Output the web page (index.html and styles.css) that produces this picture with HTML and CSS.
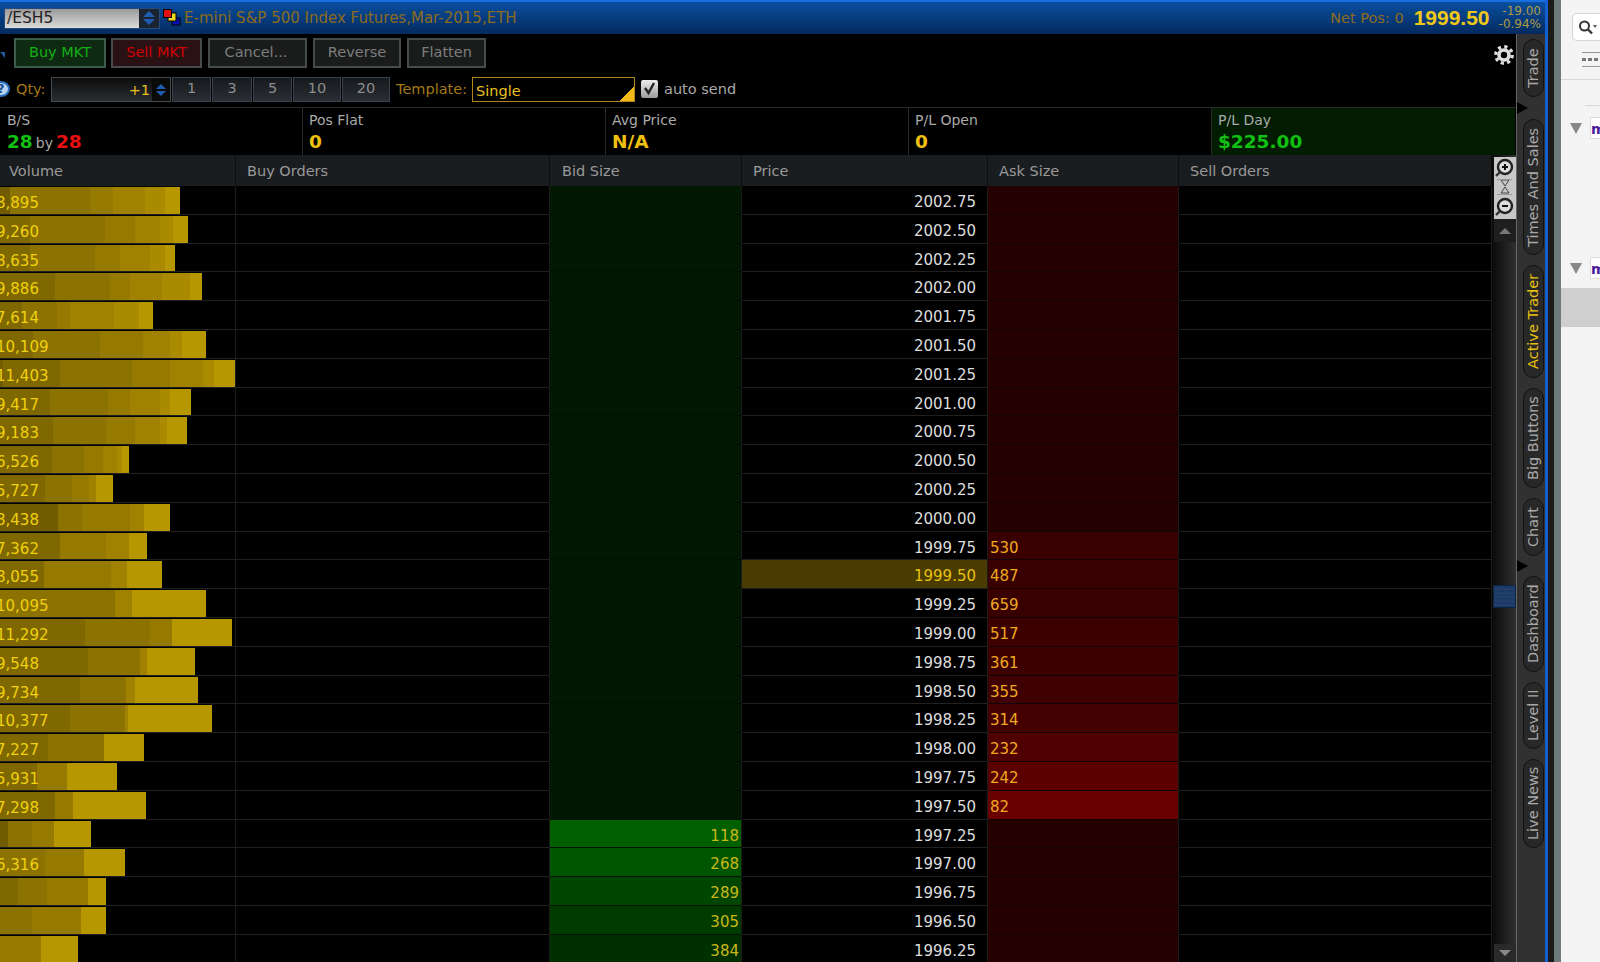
FILE: index.html

```html
<!DOCTYPE html>
<html lang="en">
<head>
  <meta charset="UTF-8">
  <title>Active Trader</title>
  <link rel="stylesheet" href="styles.css">
</head>
<body>
  <div class="app">
    <div class="titlebar">
      <div class="symbol">
        <span class="symbol-text">/ESH5</span>
        <span class="symbol-btn"><i class="up"></i><i class="down"></i></span>
      </div>
      <svg class="link-icon" width="18" height="17" viewBox="0 0 18 17">
        <rect x="9" y="9" width="8" height="7" fill="#0a10b0" stroke="#000"/>
        <rect x="5" y="4" width="8" height="8" fill="#f0d818" stroke="#000"/>
        <rect x="0.5" y="0.5" width="8" height="8" fill="#e01010" stroke="#000"/>
      </svg>
      <span class="title-text">E-mini S&amp;P 500 Index Futures,Mar-2015,ETH</span>
      <span class="netpos">Net Pos: 0</span>
      <span class="last">1999.50</span>
      <span class="change"><span>-19.00</span><span>-0.94%</span></span>
    </div>

    <div class="content">
      <div class="trader">
        <div class="toolbar">
          <i class="collapse"></i>
          <button class="btn buy">Buy MKT</button>
          <button class="btn sell">Sell MKT</button>
          <button class="btn cancel">Cancel...</button>
          <button class="btn reverse">Reverse</button>
          <button class="btn flatten">Flatten</button>
          <svg class="gear" width="22" height="22" viewBox="0 0 22 22">
            <circle cx="11" cy="11" r="8.2" fill="none" stroke="#ddd" stroke-width="3.4" stroke-dasharray="3.2 3.24"/>
            <circle cx="11" cy="11" r="5" fill="none" stroke="#ddd" stroke-width="3.6"/>
          </svg>
        </div>

        <div class="orderbar">
          <span class="help">?</span>
          <span class="orderlabel qty-label">Qty:</span>
          <div class="qty-input">
            <span>+1</span>
            <span class="spinner"><i class="up"></i><i class="down"></i></span>
          </div>
          <button class="qty w38">1</button>
          <button class="qty w39">3</button>
          <button class="qty w38">5</button>
          <button class="qty w48">10</button>
          <button class="qty w48">20</button>
          <span class="orderlabel tpl-label">Template:</span>
          <div class="template">Single</div>
          <span class="check"><svg width="17" height="18" viewBox="0 0 17 18"><path d="M4 8l3.5 5L13 3" fill="none" stroke="#222" stroke-width="2.4"/></svg></span>
          <span class="autosend">auto send</span>
        </div>

        <div class="stats">
          <div class="stat"><div class="stat-label">B/S</div><div class="stat-value"><span class="green">28</span><small>by</small><span class="red">28</span></div></div>
          <div class="stat"><div class="stat-label">Pos Flat</div><div class="stat-value">0</div></div>
          <div class="stat"><div class="stat-label">Avg Price</div><div class="stat-value">N/A</div></div>
          <div class="stat"><div class="stat-label">P/L Open</div><div class="stat-value">0</div></div>
          <div class="stat plday"><div class="stat-label">P/L Day</div><div class="stat-value green">$225.00</div></div>
        </div>

        <div class="ladder">
          <div class="table">
            <div class="head">
              <div>Volume</div><div>Buy Orders</div><div>Bid Size</div><div>Price</div><div>Ask Size</div><div>Sell Orders</div>
            </div>

            <div class="row"><div class="vol"><div class="bar"><b class="s1" style="width:10px"></b><b class="s3" style="width:80px"></b><b class="s4" style="width:23px"></b><b class="s5" style="width:32px"></b><b class="s6" style="width:20px"></b><b class="s7" style="width:15px"></b></div><span class="vol-text">8,895</span></div><div></div><div class="bid"></div><div class="price">2002.75</div><div class="ask"></div><div></div></div>
            <div class="row"><div class="vol"><div class="bar"><b class="s2" style="width:30px"></b><b class="s3" style="width:75px"></b><b class="s4" style="width:30px"></b><b class="s5" style="width:25px"></b><b class="s6" style="width:13px"></b><b class="s7" style="width:15px"></b></div><span class="vol-text">9,260</span></div><div></div><div class="bid"></div><div class="price">2002.50</div><div class="ask"></div><div></div></div>
            <div class="row"><div class="vol"><div class="bar"><b class="s2" style="width:30px"></b><b class="s3" style="width:65px"></b><b class="s4" style="width:25px"></b><b class="s5" style="width:30px"></b><b class="s6" style="width:15px"></b><b class="s7" style="width:10px"></b></div><span class="vol-text">8,635</span></div><div></div><div class="bid"></div><div class="price">2002.25</div><div class="ask"></div><div></div></div>
            <div class="row"><div class="vol"><div class="bar"><b class="s2" style="width:55px"></b><b class="s3" style="width:55px"></b><b class="s4" style="width:20px"></b><b class="s5" style="width:32px"></b><b class="s6" style="width:28px"></b><b class="s7" style="width:12px"></b></div><span class="vol-text">9,886</span></div><div></div><div class="bid"></div><div class="price">2002.00</div><div class="ask"></div><div></div></div>
            <div class="row"><div class="vol"><div class="bar"><b class="s2" style="width:22px"></b><b class="s3" style="width:35px"></b><b class="s4" style="width:13px"></b><b class="s5" style="width:44px"></b><b class="s6" style="width:25px"></b><b class="s7" style="width:14px"></b></div><span class="vol-text">7,614</span></div><div></div><div class="bid"></div><div class="price">2001.75</div><div class="ask"></div><div></div></div>
            <div class="row"><div class="vol"><div class="bar"><b class="s2" style="width:33px"></b><b class="s3" style="width:67px"></b><b class="s4" style="width:43px"></b><b class="s5" style="width:27px"></b><b class="s6" style="width:12px"></b><b class="s7" style="width:24px"></b></div><span class="vol-text">10,109</span></div><div></div><div class="bid"></div><div class="price">2001.50</div><div class="ask"></div><div></div></div>
            <div class="row"><div class="vol"><div class="bar"><b class="s1" style="width:3px"></b><b class="s2" style="width:57px"></b><b class="s3" style="width:72px"></b><b class="s4" style="width:38px"></b><b class="s5" style="width:33px"></b><b class="s6" style="width:11px"></b><b class="s7" style="width:21px"></b></div><span class="vol-text">11,403</span></div><div></div><div class="bid"></div><div class="price">2001.25</div><div class="ask"></div><div></div></div>
            <div class="row"><div class="vol"><div class="bar"><b class="s2" style="width:50px"></b><b class="s3" style="width:58px"></b><b class="s4" style="width:22px"></b><b class="s5" style="width:30px"></b><b class="s6" style="width:10px"></b><b class="s7" style="width:21px"></b></div><span class="vol-text">9,417</span></div><div></div><div class="bid"></div><div class="price">2001.00</div><div class="ask"></div><div></div></div>
            <div class="row"><div class="vol"><div class="bar"><b class="s2" style="width:53px"></b><b class="s3" style="width:53px"></b><b class="s4" style="width:29px"></b><b class="s5" style="width:25px"></b><b class="s6" style="width:7px"></b><b class="s7" style="width:20px"></b></div><span class="vol-text">9,183</span></div><div></div><div class="bid"></div><div class="price">2000.75</div><div class="ask"></div><div></div></div>
            <div class="row"><div class="vol"><div class="bar"><b class="s2" style="width:52px"></b><b class="s3" style="width:32px"></b><b class="s4" style="width:19px"></b><b class="s5" style="width:14px"></b><b class="s6" style="width:5px"></b><b class="s7" style="width:7px"></b></div><span class="vol-text">6,526</span></div><div></div><div class="bid"></div><div class="price">2000.50</div><div class="ask"></div><div></div></div>
            <div class="row"><div class="vol"><div class="bar"><b class="s2" style="width:45px"></b><b class="s3" style="width:27px"></b><b class="s4" style="width:17px"></b><b class="s5" style="width:7px"></b><b class="s7" style="width:17px"></b></div><span class="vol-text">5,727</span></div><div></div><div class="bid"></div><div class="price">2000.25</div><div class="ask"></div><div></div></div>
            <div class="row"><div class="vol"><div class="bar"><b class="s1" style="width:58px"></b><b class="s3" style="width:24px"></b><b class="s4" style="width:48px"></b><b class="s5" style="width:14px"></b><b class="s7" style="width:26px"></b></div><span class="vol-text">8,438</span></div><div></div><div class="bid"></div><div class="price">2000.00</div><div class="ask"></div><div></div></div>
            <div class="row"><div class="vol"><div class="bar"><b class="s2" style="width:60px"></b><b class="s4" style="width:46px"></b><b class="s5" style="width:23px"></b><b class="s7" style="width:18px"></b></div><span class="vol-text">7,362</span></div><div></div><div class="bid"></div><div class="price">1999.75</div><div class="ask a1">530</div><div></div></div>
            <div class="row"><div class="vol"><div class="bar"><b class="s2" style="width:44px"></b><b class="s4" style="width:67px"></b><b class="s5" style="width:16px"></b><b class="s7" style="width:35px"></b></div><span class="vol-text">8,055</span></div><div></div><div class="bid"></div><div class="price current">1999.50</div><div class="ask a1">487</div><div></div></div>
            <div class="row"><div class="vol"><div class="bar"><b class="s3" style="width:115px"></b><b class="s5" style="width:17px"></b><b class="s7" style="width:74px"></b></div><span class="vol-text">10,095</span></div><div></div><div class="bid"></div><div class="price">1999.25</div><div class="ask a1">659</div><div></div></div>
            <div class="row"><div class="vol"><div class="bar"><b class="s2" style="width:85px"></b><b class="s3" style="width:65px"></b><b class="s4" style="width:22px"></b><b class="s7" style="width:60px"></b></div><span class="vol-text">11,292</span></div><div></div><div class="bid"></div><div class="price">1999.00</div><div class="ask a2">517</div><div></div></div>
            <div class="row"><div class="vol"><div class="bar"><b class="s2" style="width:88px"></b><b class="s3" style="width:52px"></b><b class="s5" style="width:7px"></b><b class="s7" style="width:48px"></b></div><span class="vol-text">9,548</span></div><div></div><div class="bid"></div><div class="price">1998.75</div><div class="ask a2">361</div><div></div></div>
            <div class="row"><div class="vol"><div class="bar"><b class="s2" style="width:80px"></b><b class="s3" style="width:46px"></b><b class="s5" style="width:9px"></b><b class="s7" style="width:63px"></b></div><span class="vol-text">9,734</span></div><div></div><div class="bid"></div><div class="price">1998.50</div><div class="ask a3">355</div><div></div></div>
            <div class="row"><div class="vol"><div class="bar"><b class="s2" style="width:70px"></b><b class="s3" style="width:55px"></b><b class="s5" style="width:3px"></b><b class="s7" style="width:84px"></b></div><span class="vol-text">10,377</span></div><div></div><div class="bid"></div><div class="price">1998.25</div><div class="ask a4">314</div><div></div></div>
            <div class="row"><div class="vol"><div class="bar"><b class="s2" style="width:48px"></b><b class="s3" style="width:56px"></b><b class="s7" style="width:40px"></b></div><span class="vol-text">7,227</span></div><div></div><div class="bid"></div><div class="price">1998.00</div><div class="ask a5">232</div><div></div></div>
            <div class="row"><div class="vol"><div class="bar"><b class="s2" style="width:37px"></b><b class="s4" style="width:30px"></b><b class="s7" style="width:50px"></b></div><span class="vol-text">5,931</span></div><div></div><div class="bid"></div><div class="price">1997.75</div><div class="ask a6">242</div><div></div></div>
            <div class="row"><div class="vol"><div class="bar"><b class="s2" style="width:55px"></b><b class="s4" style="width:18px"></b><b class="s7" style="width:73px"></b></div><span class="vol-text">7,298</span></div><div></div><div class="bid"></div><div class="price">1997.50</div><div class="ask a7">82</div><div></div></div>
            <div class="row"><div class="vol"><div class="bar"><b class="s1" style="width:8px"></b><b class="s3" style="width:24px"></b><b class="s4" style="width:22px"></b><b class="s7" style="width:37px"></b></div></div><div></div><div class="bid b1">118</div><div class="price">1997.25</div><div class="ask"></div><div></div></div>
            <div class="row"><div class="vol"><div class="bar"><b class="s3" style="width:45px"></b><b class="s4" style="width:39px"></b><b class="s7" style="width:41px"></b></div><span class="vol-text">6,316</span></div><div></div><div class="bid b2">268</div><div class="price">1997.00</div><div class="ask"></div><div></div></div>
            <div class="row"><div class="vol"><div class="bar"><b class="s2" style="width:18px"></b><b class="s3" style="width:29px"></b><b class="s4" style="width:41px"></b><b class="s7" style="width:18px"></b></div></div><div></div><div class="bid b3">289</div><div class="price">1996.75</div><div class="ask"></div><div></div></div>
            <div class="row"><div class="vol"><div class="bar"><b class="s3" style="width:32px"></b><b class="s4" style="width:49px"></b><b class="s7" style="width:25px"></b></div></div><div></div><div class="bid b4">305</div><div class="price">1996.50</div><div class="ask"></div><div></div></div>
            <div class="row"><div class="vol"><div class="bar"><b class="s4" style="width:41px"></b><b class="s7" style="width:37px"></b></div></div><div></div><div class="bid b5">384</div><div class="price">1996.25</div><div class="ask"></div><div></div></div>
          </div>

          <div class="scrollbar">
            <div class="zoomer">
              <svg width="21" height="60" viewBox="0 0 21 60">
                <circle cx="11" cy="10" r="7" fill="#ddd" stroke="#222" stroke-width="2.4"/>
                <path d="M8 10h6M11 7v6" stroke="#111" stroke-width="2"/>
                <path d="M6 15l-4 4" stroke="#333" stroke-width="2.4"/>
                <path d="M7 23h8l-4 6zM7 36h8l-4-6z" fill="none" stroke="#444"/>
                <path d="M3 22.500h15M3 37.500h15" stroke="#999"/>
                <circle cx="11" cy="49" r="7" fill="#ddd" stroke="#222" stroke-width="2.4"/>
                <path d="M8 49h6" stroke="#111" stroke-width="2"/>
                <path d="M6 54l-4 4" stroke="#333" stroke-width="2.4"/>
              </svg>
            </div>
            <div class="scroll-btn"><i class="tri-up"></i></div>
            <div class="track"><div class="thumb"></div></div>
            <div class="scroll-btn bottom"><i class="tri-down"></i></div>
          </div>
        </div>
      </div>

      <div class="tabs">
        <div class="tab h58">Trade</div>
        <div class="tab-gap g22"><i></i></div>
        <div class="tab h136">Times And Sales</div>
        <div class="tab active h113">Active Trader</div>
        <div class="tab h100">Big Buttons</div>
        <div class="tab h58">Chart</div>
        <div class="tab-gap g20"><i></i></div>
        <div class="tab h96">Dashboard</div>
        <div class="tab h67">Level II</div>
        <div class="tab h89">Live News</div>
      </div>
    </div>
  </div>

  <div class="edge"></div>

  <div class="side">
    <div class="search">
      <svg width="20" height="18" viewBox="0 0 20 18">
        <circle cx="6.500" cy="7" r="4.500" fill="none" stroke="#333" stroke-width="2"/>
        <path d="M10 10.500l4 4" stroke="#333" stroke-width="2.400"/>
        <path d="M15 6h4l-2 3z" fill="#555"/>
      </svg>
    </div>
    <div class="dots"><i></i><i></i><i></i></div>
    <div class="side-rule"></div>
    <div class="side-rule short"></div>
    <div class="file-row first"><i class="tree-tri"></i><span class="file">m</span></div>
    <div class="file-row second"><i class="tree-tri"></i><span class="file">m</span></div>
    <div class="selected"></div>
  </div>
</body>
</html>
```

FILE: styles.css

```css
body {
  margin: 0;
  width: 1600px;
  height: 962px;
  overflow: hidden;
  display: flex;
  background: #f4f4f4;
  font-family: "DejaVu Sans", sans-serif;
  color: #aaa;
}

i, b {
  display: block;
  font-style: normal;
}

.app {
  width: 1545px;
  height: 962px;
  flex: none;
  display: flex;
  flex-direction: column;
  background: #000;
}

/* title bar */
.titlebar {
  height: 34px;
  box-sizing: border-box;
  flex: none;
  display: flex;
  align-items: center;
  padding: 0 4px;
  border-top: 2px solid #1a6fe0;
  background: linear-gradient(#0a4f9f, #042a5e);
}

.symbol {
  width: 156px;
  height: 21px;
  display: flex;
  background: linear-gradient(#9a9a9a, #dcdcdc);
  border: 1px solid #274a78;
  box-sizing: border-box;
}

.symbol-text {
  flex: 1;
  padding-left: 2px;
  font-size: 15.500px;
  line-height: 19px;
  color: #222;
}

.symbol-btn {
  width: 20px;
  background: #1a2330;
  display: flex;
  flex-direction: column;
  align-items: center;
  justify-content: center;
  gap: 2px;
}

.up {
  width: 0;
  height: 0;
  border-left: 6px solid transparent;
  border-right: 6px solid transparent;
  border-bottom: 6px solid #1f5cb0;
}

.down {
  width: 0;
  height: 0;
  border-left: 6px solid transparent;
  border-right: 6px solid transparent;
  border-top: 6px solid #1f5cb0;
}

.link-icon {
  margin-left: 3px;
  margin-top: -1px;
}

.title-text {
  margin-left: 3px;
  flex: 1;
  font-size: 15px;
  color: #8c6c1c;
}

.netpos {
  font-size: 14.500px;
  color: #8c6c1c;
}

.last {
  margin-left: 10px;
  font-family: "Liberation Sans", sans-serif;
  font-size: 21px;
  font-weight: bold;
  color: #f0c818;
}

.change {
  margin-left: 9px;
  display: flex;
  flex-direction: column;
  font-size: 12px;
  line-height: 13px;
  color: #b09a40;
  text-align: right;
}

.content {
  flex: 1;
  display: flex;
  min-height: 0;
}

.trader {
  width: 1516px;
  flex: none;
  display: flex;
  flex-direction: column;
}

/* buy / sell buttons */
.toolbar {
  height: 43px;
  flex: none;
  display: flex;
  align-items: flex-start;
  padding-top: 4px;
  box-sizing: border-box;
}

.collapse {
  width: 0;
  height: 0;
  margin: 14px 9px 0 0;
  border-left: 5px solid transparent;
  border-top: 6px solid #1f5aa0;
}

.btn {
  height: 30px;
  padding: 0 0 2px 0;
  margin-right: 5px;
  font-family: inherit;
  font-size: 14.500px;
  border: 2px solid #464c4c;
  background: #1a1c1c;
  color: #7c7c7c;
}

.buy { width: 92px; background: #0e2a12; border-color: #3c5c4c; color: #12b012; }
.sell { width: 91px; margin-right: 6px; background: #2a1214; color: #d00000; }
.cancel { width: 99px; margin-right: 6px; padding-right: 3px; }
.reverse { width: 88px; margin-right: 6px; }
.flatten { width: 79px; }

.gear {
  margin: 6px 0 0 auto;
  margin-right: 1px;
}

/* quantity row */
.orderbar {
  height: 30px;
  flex: none;
  display: flex;
  align-items: flex-start;
  box-sizing: border-box;
}

.help {
  width: 18px;
  height: 16px;
  margin: 4px 0 0 -8px;
  border-radius: 50%;
  background: #b8d4ee;
  border: 2px solid #2a70c0;
  box-sizing: border-box;
  font-size: 12px;
  font-weight: bold;
  line-height: 13px;
  text-align: center;
  color: #1a4a90;
}

.orderlabel {
  font-size: 14.500px;
  line-height: 24px;
  color: #a07818;
}

.qty-label {
  margin: 0 6px 0 6px;
  width: 29px;
}

.qty-input {
  width: 120px;
  height: 25px;
  box-sizing: border-box;
  display: flex;
  justify-content: flex-end;
  align-items: center;
  background: linear-gradient(#0c0c0c, #2a2d30);
  border: 1px solid #424a52;
  font-size: 14.500px;
  color: #e8c020;
}

.spinner {
  width: 18px;
  height: 23px;
  margin-left: 2px;
  background: #0a0a0a;
  display: flex;
  flex-direction: column;
  align-items: center;
  justify-content: center;
  gap: 2px;
}

.spinner .up { border-left-width: 5px; border-right-width: 5px; border-bottom-width: 5px; }
.spinner .down { border-left-width: 5px; border-right-width: 5px; border-top-width: 5px; }

.qty {
  height: 25px;
  padding: 0 0 3px 0;
  margin: 0 0 0 1px;
  font-family: inherit;
  font-size: 14.500px;
  color: #8c8c8c;
  background: linear-gradient(#16191c, #2a2e34);
  border: 1px solid #39424c;
}

.w38 { width: 39px; }
.w39 { width: 40px; }
.w48 { width: 48px; }

.tpl-label {
  margin-left: 6px;
  width: 76px;
}

.template {
  width: 163px;
  height: 25px;
  box-sizing: border-box;
  background: linear-gradient(135deg, #000 92%, #f0b818 92%);
  border: 1px solid #b08418;
  padding-left: 3px;
  font-size: 14.500px;
  line-height: 26px;
  color: #e8c020;
}

.check {
  width: 17px;
  height: 18px;
  margin: 3px 0 0 6px;
  background: linear-gradient(#eee, #999);
  border-radius: 2px;
}

.autosend {
  margin-left: 6px;
  font-size: 14.500px;
  line-height: 24px;
  color: #a8a8a8;
}

/* position summary */
.stats {
  height: 48px;
  flex: none;
  display: grid;
  grid-template-columns: repeat(5, 303px);
  border-top: 1px solid #2a2a2a;
  box-sizing: border-box;
}

.stat {
  border-right: 1px solid #2a2a2a;
  padding-left: 6px;
}

.stat:first-child {
  padding-left: 7px;
}

.plday {
  background: #021c02;
  border-right: none;
}

.stat-label {
  padding-top: 4px;
  font-size: 14px;
  line-height: 17px;
}

.stat-value {
  margin-top: 1px;
  font-size: 18.500px;
  font-weight: bold;
  line-height: 24px;
  color: #f0c010;
}

.stat-value small {
  margin: 0 3px;
  font-size: 14px;
  font-weight: normal;
  color: #aaa;
}

.green { color: #12c012; }
.red { color: #e81010; }
.stat-value.green { color: #12c012; }

/* ladder */
.ladder {
  flex: 1;
  min-height: 0;
  display: flex;
}

.table {
  width: 1492px;
  flex: none;
}

.head, .row {
  display: grid;
  grid-template-columns: 236px 314px 192px 246px 191px 313px;
}

.head {
  height: 31px;
  background: #1a1d20;
  font-size: 14.500px;
  line-height: 29px;
  color: #999;
}

.head div {
  box-sizing: border-box;
  padding: 2px 0 0 11px;
  border-right: 1px solid #0e0e0e;
}

.head div:first-child {
  padding-left: 9px;
}

.head div:nth-child(3) {
  padding-left: 12px;
}

.row {
  height: 28.800px;
  box-sizing: border-box;
  grid-template-rows: 27.800px;
  border-bottom: 1px solid #202020;
  font-size: 15px;
  line-height: 28px;
}

.row > div {
  box-sizing: border-box;
  padding-top: 2px;
  border-right: 1px solid #1c1c1c;
  min-width: 0;
}

.row > .vol {
  position: relative;
  padding-top: 1px;
  overflow: hidden;
}

.bar {
  display: flex;
  height: 26.800px;
}

.s1 { background: #725c00; }
.s2 { background: #806800; }
.s3 { background: #8c7200; }
.s4 { background: #967a00; }
.s5 { background: #a08200; }
.s6 { background: #aa8b00; }
.s7 { background: #b69700; }

.vol-text {
  position: absolute;
  left: -4px;
  top: 3px;
  color: #f0d010;
}

.bid {
  background: #021802;
  box-shadow: 0 1px 0 #041004;
  text-align: right;
  padding-right: 2px;
  color: #c8b818;
}

.b1 { background: #006000; }
.b2 { background: #005600; }
.b3 { background: #004600; }
.b4 { background: #003c00; }
.b5 { background: #003000; }

.price {
  text-align: right;
  padding-right: 11px;
  color: #ddd;
}

.current {
  background: #4a3c00;
  color: #e8c010;
}

.ask {
  background: #240000;
  box-shadow: 0 1px 0 #120404;
  padding-left: 2px;
  color: #f0a820;
}

.a1 { background: #380000; }
.a2 { background: #3c0000; }
.a3 { background: #3e0000; }
.a4 { background: #440000; }
.a5 { background: #500000; }
.a6 { background: #5a0000; }
.a7 { background: #680000; }

/* scrollbar */
.scrollbar {
  width: 24px;
  flex: none;
  display: flex;
  flex-direction: column;
  background: linear-gradient(90deg, #0a0a0a, #303030);
}

.zoomer {
  height: 62px;
  margin: 2px 0 0 2px;
  background: #c8c8c8;
  flex: none;
}

.zoomer svg {
  display: block;
}

.scroll-btn {
  height: 23px;
  flex: none;
  margin-left: 2px;
  background: #1e1e1e;
  display: flex;
  align-items: center;
  justify-content: center;
}

.scroll-btn.bottom {
  height: 18px;
  background: #2a2a2a;
}

.tri-up {
  width: 0;
  height: 0;
  border-left: 6px solid transparent;
  border-right: 6px solid transparent;
  border-bottom: 6px solid #777;
}

.tri-down {
  width: 0;
  height: 0;
  border-left: 6px solid transparent;
  border-right: 6px solid transparent;
  border-top: 6px solid #888;
}

.track {
  flex: 1;
}

.thumb {
  height: 23px;
  margin: 343px 0 0 1px;
  box-sizing: border-box;
  background: repeating-linear-gradient(#1c3a66 0, #1c3a66 2px, #223f6c 2px, #223f6c 4px);
  border: 1px solid #0e2340;
}

/* side tabs */
.tabs {
  flex: 1;
  box-sizing: border-box;
  padding: 5px 2px 0 6px;
  display: flex;
  flex-direction: column;
  gap: 10px;
  background: #313131;
  border-left: 1px solid #666;
}

.tab {
  flex: none;
  box-sizing: border-box;
  writing-mode: vertical-rl;
  transform: rotate(180deg);
  text-align: center;
  font-size: 14.500px;
  line-height: 19px;
  border-radius: 11px;
  background: #282828;
  border: 1px solid #111;
  color: #a8a8a8;
}

.active { color: #e8c010; }

.h58 { height: 58px; }
.h136 { height: 136px; }
.h113 { height: 113px; }
.h100 { height: 100px; }
.h96 { height: 96px; }
.h67 { height: 67px; }
.h89 { height: 89px; }

.tab-gap {
  flex: none;
  margin: -10px 0 -10px -6px;
  display: flex;
  align-items: center;
}

.g22 { height: 22px; }
.g20 { height: 20px; }

.tab-gap i {
  width: 0;
  height: 0;
  border-top: 6px solid transparent;
  border-bottom: 6px solid transparent;
  border-left: 11px solid #000;
}

/* desktop edge */
.edge {
  width: 16px;
  flex: none;
  box-sizing: border-box;
  border-left: 3px solid #1560d0;
  border-right: 7px solid #6f7a7c;
  background: #1a1a1a;
}

/* panel of the next window */
.side {
  flex: 1;
  min-width: 0;
  display: flex;
  flex-direction: column;
  overflow: hidden;
  background: #f4f4f4;
}

.search {
  width: 50px;
  height: 28px;
  flex: none;
  box-sizing: border-box;
  margin: 13px 0 0 11px;
  padding: 5px 0 0 5px;
  background: #fff;
  border: 1px solid #d4d4d4;
  border-radius: 5px;
}

.search svg {
  display: block;
}

.dots {
  width: 30px;
  height: 15px;
  flex: none;
  box-sizing: border-box;
  margin: 11px 0 0 21px;
  padding-top: 5px;
  display: flex;
  gap: 2px;
  border-top: 1px solid #999;
  border-bottom: 1px solid #999;
}

.dots i {
  width: 4px;
  height: 3px;
  background: #777;
}

.side-rule {
  height: 1px;
  flex: none;
  margin-top: 12px;
  background: #d8d8d8;
}

.side-rule.short {
  margin: 25px 0 0 24px;
}

.file-row {
  height: 24px;
  flex: none;
  display: flex;
  align-items: center;
  gap: 8px;
  padding-left: 9px;
}

.file-row.first { margin-top: 10px; }
.file-row.second { margin-top: 116px; }

.tree-tri {
  width: 0;
  height: 0;
  flex: none;
  border-left: 6px solid transparent;
  border-right: 6px solid transparent;
  border-top: 11px solid #888;
}

.file {
  width: 18px;
  height: 22px;
  flex: none;
  box-sizing: border-box;
  padding-top: 4px;
  background: #fff;
  border: 1px solid #ddd;
  font-size: 14px;
  font-weight: bold;
  line-height: 15px;
  color: #4a1a9a;
}

.selected {
  height: 39px;
  flex: none;
  margin-top: 8px;
  background: #cfcfcf;
}
```
